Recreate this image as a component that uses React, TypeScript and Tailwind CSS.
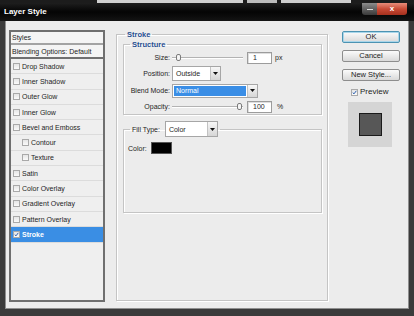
import React from "react";

type Item = { label: string; indent?: boolean; checked?: boolean };

const items: Item[] = [
  { label: "Drop Shadow" },
  { label: "Inner Shadow" },
  { label: "Outer Glow" },
  { label: "Inner Glow" },
  { label: "Bevel and Emboss" },
  { label: "Contour", indent: true },
  { label: "Texture", indent: true },
  { label: "Satin" },
  { label: "Color Overlay" },
  { label: "Gradient Overlay" },
  { label: "Pattern Overlay" },
  { label: "Stroke", checked: true },
];

function Check({ checked }: { checked?: boolean }) {
  return (
    <span className="flex h-[7px] w-[7px] shrink-0 items-center justify-center border border-[#a9a9a9] bg-gradient-to-b from-[#e6e6e6] to-[#fafafa]">
      {checked && (
        <svg width="7" height="7" viewBox="0 0 7 7">
          <path d="M1 3.6 L2.8 5.4 L6 1.2" fill="none" stroke="#2a5fb0" strokeWidth="1.4" />
        </svg>
      )}
    </span>
  );
}

function Arrow() {
  return (
    <svg width="5" height="3" viewBox="0 0 5 3">
      <polygon points="0,0 5,0 2.5,3" fill="#111" />
    </svg>
  );
}

function DropButton() {
  return (
    <span className="flex h-full w-[10px] shrink-0 items-center justify-center border-l border-[#c2c2c2] bg-gradient-to-b from-[#f7f7f7] to-[#d6d6d6]">
      <Arrow />
    </span>
  );
}

function Slider({ thumb }: { thumb: string }) {
  return (
    <div className="relative ml-[2px] h-[9px] w-[71px] shrink-0">
      <div className="absolute left-0 right-0 top-[4px] h-[2px] border-b border-white bg-[#b3b3b3]" />
      <div className={"absolute top-[1px] h-[7px] w-[5px] rounded-[2px] border border-[#7c7c7c] bg-[#f5f5f5] " + thumb} />
    </div>
  );
}

function NumBox({ value }: { value: string }) {
  return (
    <div className="ml-[4px] flex h-[12px] w-[25px] shrink-0 items-center border border-[#9c9c9c] bg-white pl-[5px] shadow-[inset_1px_1px_0_#dedede]">
      {value}
    </div>
  );
}

function Button({ label, primary }: { label: string; primary?: boolean }) {
  return (
    <div
      className={
        "flex h-[12px] items-center justify-center rounded-[2px] border bg-gradient-to-b from-[#fbfbfb] to-[#d9d9d9] text-[7.5px] text-[#222] " +
        (primary ? "border-[#4c93b2] shadow-[inset_0_0_0_1px_#a9d6ea]" : "border-[#8d8d8d]")
      }
    >
      {label}
    </div>
  );
}

export default function App() {
  return (
    <div className="flex h-[316px] w-[414px] flex-col overflow-hidden bg-[#ececec] font-['Liberation_Sans',Arial,sans-serif] text-[7px] leading-none text-[#1e1e1e]">
      {/* window behind */}
      <div className="flex h-[3px] shrink-0 bg-[#1c1c1c]">
        <div className="ml-[97px] w-[146px] bg-[#d0d0d0]" />
        <div className="ml-[4px] w-[30px] bg-[#bcbcbc]" />
        <div className="ml-[4px] w-[70px] bg-[#cfcfcf]" />
      </div>

      {/* title bar */}
      <div className="flex h-[18px] shrink-0 items-start justify-between bg-gradient-to-b from-[#1e1e1e] via-[#050505] to-[#141414] pl-[4px] pr-[7px]">
        <span className="self-center text-[8px] font-bold text-white">Layer Style</span>
        <div className="flex">
          <div className="flex h-[12px] w-[15px] items-center justify-center rounded-bl-[3px] bg-gradient-to-b from-[#8c8c8c] to-[#3a3a3a]">
            <span className="h-[1px] w-[6px] bg-[#ddd]" />
          </div>
          <div className="flex h-[12px] w-[30px] items-center justify-center rounded-br-[3px] bg-gradient-to-b from-[#e88c7a] via-[#c94a35] to-[#a5301e] text-[8px] font-bold text-white">
            x
          </div>
        </div>
      </div>

      {/* body */}
      <div className="flex flex-1 border-x-[5px] border-b-[7px] border-[#3b3b3b] pl-[4px] pt-[9px] shadow-[inset_1px_0_0_#8f8f8f,inset_-1px_0_0_#8f8f8f,inset_0_-1px_0_#8f8f8f]">
        {/* styles list */}
        <div className="h-[272px] w-[96px] shrink-0 border-2 border-[#6f6f6f] bg-[#efefef]">
          <div className="flex h-[13px] items-center border-b-2 border-[#a3a3a3] bg-[#f4f4f4] pl-[1px]">Styles</div>
          <div className="flex h-[14px] items-center border-b-2 border-[#707070] bg-[#f4f4f4] pl-[1px]">
            Blending Options: Default
          </div>
          {items.map((it) => (
            <div
              key={it.label}
              className={
                "flex h-[15.3px] items-center border-b border-[#dcdcdc] " +
                (it.indent ? "pl-[11px] " : "pl-[2px] ") +
                (it.checked ? "bg-[#3a8ee4] font-bold text-white" : "")
              }
            >
              <Check checked={it.checked} />
              <span className="ml-[2px]">{it.label}</span>
            </div>
          ))}
        </div>

        {/* stroke group */}
        <fieldset className="ml-[11px] h-[271px] w-[212px] shrink-0 border border-[#c4c4c4] shadow-[inset_1px_1px_0_#fff,1px_1px_0_#fff]">
          <legend className="ml-[8px] px-[2px] text-[7.5px] font-bold leading-[9px] text-[#1f4f91]">Stroke</legend>
          <div className="pl-[6px] pr-[5px] pt-[1px]">
            <fieldset className="h-[75px] border border-[#c4c4c4] shadow-[inset_1px_1px_0_#fff,1px_1px_0_#fff]">
              <legend className="ml-[6px] px-[2px] text-[7.5px] font-bold leading-[9px] text-[#1f4f91]">Structure</legend>
              <div className="pt-[1px]">
                <div className="flex h-[15px] items-center">
                  <span className="w-[46px] text-right">Size:</span>
                  <Slider thumb="left-[4px]" />
                  <NumBox value="1" />
                  <span className="ml-[3px]">px</span>
                </div>
                <div className="flex h-[17px] items-center">
                  <span className="w-[46px] text-right">Position:</span>
                  <div className="ml-[2px] flex h-[15px] w-[49px] items-center border border-[#a6a6a6] bg-white">
                    <span className="flex-1 pl-[3px]">Outside</span>
                    <DropButton />
                  </div>
                </div>
                <div className="flex h-[17px] items-center">
                  <span className="w-[46px] text-right">Blend Mode:</span>
                  <div className="ml-[2px] flex h-[14px] w-[86px] items-center border border-[#a6a6a6] bg-white">
                    <span className="mx-[1px] flex h-[10px] flex-1 items-center bg-[#3a8ee6] pl-[2px] text-white">Normal</span>
                    <DropButton />
                  </div>
                </div>
                <div className="flex h-[15px] items-center">
                  <span className="w-[46px] text-right">Opacity:</span>
                  <Slider thumb="left-[65px]" />
                  <NumBox value="100" />
                  <span className="ml-[5px]">%</span>
                </div>
              </div>
            </fieldset>

            <fieldset className="mt-[6px] h-[92px] border border-[#c4c4c4] shadow-[inset_1px_1px_0_#fff,1px_1px_0_#fff]">
              <legend className="ml-[6px] px-[2px]">
                <div className="flex items-center">
                  <span>Fill Type:</span>
                  <div className="ml-[5px] flex h-[16px] w-[53px] items-center border border-[#a6a6a6] bg-white">
                    <span className="flex-1 pl-[3px]">Color</span>
                    <DropButton />
                  </div>
                </div>
              </legend>
              <div className="flex h-[12px] items-center pl-[4px] pt-[0px] mt-[5px]">
                <span>Color:</span>
                <span className="ml-[4px] h-[12px] w-[21px] border border-[#555] bg-black" />
              </div>
            </fieldset>
          </div>
        </fieldset>

        {/* buttons */}
        <div className="ml-[14px] flex w-[58px] shrink-0 flex-col pt-[1px]">
          <Button label="OK" primary />
          <div className="mt-[7px]">
            <Button label="Cancel" />
          </div>
          <div className="mt-[7px]">
            <Button label="New Style..." />
          </div>
          <div className="mt-[6px] flex h-[10px] items-center pl-[9px]">
            <Check checked />
            <span className="ml-[2px] text-[8px]">Preview</span>
          </div>
          <div className="ml-[6px] mt-[5px] flex h-[45px] w-[44px] items-center justify-center bg-[#d5d5d5]">
            <div className="h-[23px] w-[23px] border border-[#1a1a1a] bg-[#575757]" />
          </div>
        </div>
      </div>
    </div>
  );
}
